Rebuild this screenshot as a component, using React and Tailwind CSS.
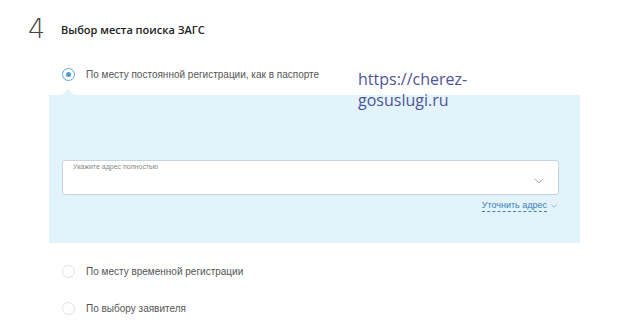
import { ChevronDown } from "lucide-react";

function Radio({ checked }) {
  return (
    <span
      className={`relative flex h-[13px] w-[13px] items-center justify-center rounded-full border bg-white ${
        checked ? "border-[#5aa6d8]" : "border-[#dde3e8]"
      }`}
    >
      {checked && <span className="h-[5px] w-[5px] rounded-full bg-[#4a9ad2]" />}
    </span>
  );
}

export default function App() {
  return (
    <div
      className="relative h-[330px] w-[640px] overflow-hidden bg-white"
      style={{ fontFamily: "Arial, 'Liberation Sans', sans-serif" }}
    >
      {/* Step header */}
      <div className="flex items-center pl-[28px] pt-[14px]">
        <span className="w-[33px] text-[27px] font-thin leading-[30px] text-[#444]" style={{ fontFamily: "'DejaVu Sans', sans-serif", fontWeight: 200 }}>
          4
        </span>
        <span className="mt-[3px] text-[11px] font-bold text-[#222]" style={{ fontFamily: "'Open Sans', sans-serif", fontWeight: 600 }}>
          Выбор места поиска ЗАГС
        </span>
      </div>

      {/* Option 1 */}
      <div className="ml-[62px] mt-[23px] flex items-center gap-[11px]">
        <Radio checked />
        <span className="text-[10px] text-[#555]">По месту постоянной регистрации, как в паспорте</span>
      </div>

      {/* Watermark */}
      <div
        className="absolute left-[358px] top-[69px] z-10 text-[16px] leading-[21px] text-[#4f5399]"
        style={{ fontFamily: "'Open Sans', sans-serif" }}
      >
        https://cherez-
        <br />
        gosuslugi.ru
      </div>

      {/* Expanded panel */}
      <div className="relative ml-[49px] mt-[13px] h-[148px] w-[531px] bg-[#e3f3fc]">
        <div className="absolute -top-[6px] left-[13px] h-0 w-0 border-x-[6px] border-b-[6px] border-x-transparent border-b-[#e3f3fc]" />
        <div className="ml-[13px] pt-[65px]">
          <div className="relative h-[35px] w-[497px] rounded-[3px] border border-[#c8d3dc] bg-white">
            <span className="absolute left-[10px] top-[1px] text-[7px] text-[#888]">Укажите адрес полностью</span>
            <ChevronDown className="absolute right-[11px] top-[12px] text-[#8a9099]" size={16} strokeWidth={1.2} />
          </div>
          <div className="mt-[5px] flex w-[497px] items-center justify-end gap-[2px] pr-[0px]">
            <span className="border-b border-dashed border-[#3a80b8] text-[9px] leading-[11px] text-[#3a80b8]">
              Уточнить адрес
            </span>
            <ChevronDown className="text-[#5b9bd0]" size={10} strokeWidth={1.5} />
          </div>
        </div>
      </div>

      {/* Option 2 */}
      <div className="ml-[62px] mt-[21px] flex items-center gap-[11px]">
        <Radio />
        <span className="text-[10px] text-[#555]">По месту временной регистрации</span>
      </div>

      {/* Option 3 */}
      <div className="ml-[62px] mt-[22px] flex items-center gap-[11px]">
        <Radio />
        <span className="text-[10px] text-[#555]">По выбору заявителя</span>
      </div>
    </div>
  );
}
